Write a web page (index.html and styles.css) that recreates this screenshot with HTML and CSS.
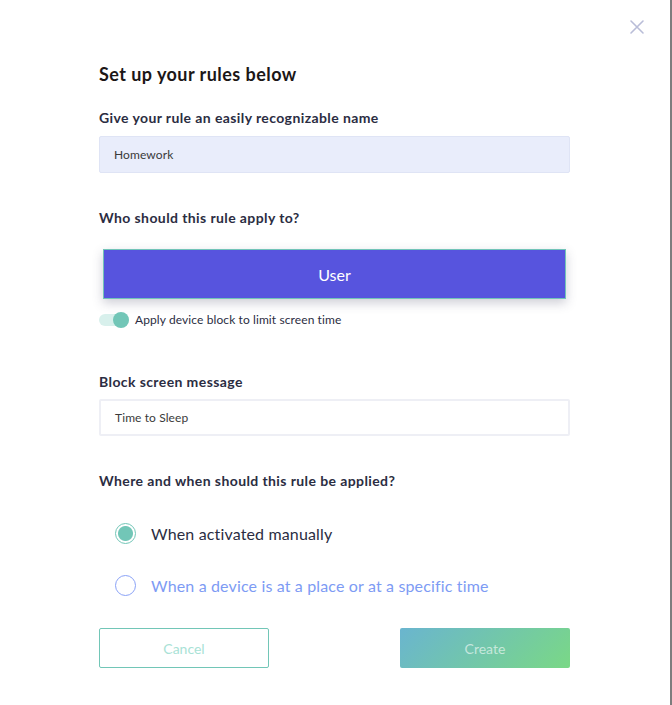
FILE: index.html
```html
<!DOCTYPE html>
<html lang="en">
<head>
  <meta charset="UTF-8">
  <meta name="viewport" content="width=device-width, initial-scale=1.0">
  <title>Set up rules</title>
  <link rel="stylesheet" href="styles.css">
</head>
<body>
  <div class="modal">
    <button class="close" aria-label="Close">
      <svg width="16" height="16" viewBox="0 0 16 16">
        <path d="M2 2L14 14M14 2L2 14" stroke="#b9bdd8" stroke-width="1.6" stroke-linecap="round"/>
      </svg>
    </button>

    <h1>Set up your rules below</h1>

    <label class="label">Give your rule an easily recognizable name</label>
    <div class="input filled">Homework</div>

    <label class="label who">Who should this rule apply to?</label>
    <div class="user-btn">User</div>

    <div class="toggle-row">
      <span class="toggle"><span class="knob"></span></span>
      <span>Apply device block to limit screen time</span>
    </div>

    <label class="label block">Block screen message</label>
    <div class="input plain">Time to Sleep</div>

    <label class="label where">Where and when should this rule be applied?</label>

    <div class="radio-row checked">
      <span class="radio"></span>
      <span>When activated manually</span>
    </div>
    <div class="radio-row">
      <span class="radio"></span>
      <span>When a device is at a place or at a specific time</span>
    </div>

    <div class="actions">
      <button class="btn cancel">Cancel</button>
      <button class="btn create">Create</button>
    </div>
  </div>
</body>
</html>
```

FILE: styles.css
```css
body {
  margin: 0;
  font-family: Lato, "Noto Sans", sans-serif;
  background: #ffffff;
}

.modal {
  position: relative;
  box-sizing: border-box;
  width: 672px;
  height: 705px;
  padding: 63px 100px 0 99px;
  border-right: 2px solid #7d7d7d;
  display: flex;
  flex-direction: column;
}

.close {
  position: absolute;
  top: 19px;
  right: 25px;
  border: none;
  background: none;
  padding: 0;
  width: 16px;
  height: 16px;
  cursor: pointer;
}

h1 {
  margin: 0;
  font-size: 18px;
  font-weight: 700;
  letter-spacing: 0.45px;
  color: #1c1717;
  line-height: 22px;
}

.label {
  display: block;
  margin-top: 24px;
  font-size: 14px;
  font-weight: 700;
  letter-spacing: 0.4px;
  color: #2b2d42;
  line-height: 18px;
}

.input {
  box-sizing: border-box;
  height: 37px;
  margin-top: 9px;
  padding: 0 14px;
  display: flex;
  align-items: center;
  font-size: 12px;
  letter-spacing: 0.1px;
  color: #3a3a3a;
  border-radius: 2px;
}

.filled {
  background: #e9edfb;
  border: 1px solid #dfe4f5;
}

.plain {
  margin-top: 8px;
  background: #ffffff;
  border: 2px solid #eeeff5;
}

.who {
  margin-top: 36px;
}

.user-btn {
  margin: 22px 4px 0 4px;
  height: 50px;
  box-sizing: border-box;
  display: flex;
  align-items: center;
  justify-content: center;
  background: #5754de;
  border: 1px solid #72c4b8;
  color: #ffffff;
  font-size: 16px;
  box-shadow: 0 4px 10px rgba(60, 60, 90, 0.25);
}

.toggle-row {
  margin-top: 13px;
  display: flex;
  align-items: center;
  gap: 6px;
  font-size: 12px;
  letter-spacing: 0.1px;
  color: #2b2d42;
}

.toggle {
  position: relative;
  width: 30px;
  height: 12px;
  border-radius: 6px;
  background: #d8f0ec;
}

.knob {
  position: absolute;
  right: 0;
  top: -2px;
  width: 16px;
  height: 16px;
  border-radius: 50%;
  background: #72c6b7;
}

.block {
  margin-top: 46px;
}

.where {
  margin-top: 36px;
}

.radio-row {
  display: flex;
  align-items: center;
  gap: 15px;
  margin-left: 16px;
  font-size: 16px;
  letter-spacing: 0.15px;
  color: #7d9bf4;
  height: 22px;
}

.radio-row.checked {
  margin-top: 32px;
  color: #2b2d42;
}

.radio-row + .radio-row {
  margin-top: 30px;
}

.radio {
  box-sizing: border-box;
  width: 21px;
  height: 21px;
  border-radius: 50%;
  border: 1.5px solid #8aa2f7;
}

.checked .radio {
  border-color: #72c6b7;
  background: radial-gradient(circle, #72c6b7 7px, #ffffff 8px);
}

.actions {
  margin-top: 32px;
  display: flex;
  justify-content: space-between;
}

.btn {
  width: 170px;
  height: 40px;
  font-family: inherit;
  font-size: 14px;
  border-radius: 2px;
  cursor: pointer;
}

.cancel {
  background: #ffffff;
  border: 1px solid #72c6b7;
  color: #a9e2d6;
}

.create {
  border: none;
  color: rgba(255, 255, 255, 0.6);
  background: linear-gradient(135deg, #6ab5cf, #7ad886);
}
```
